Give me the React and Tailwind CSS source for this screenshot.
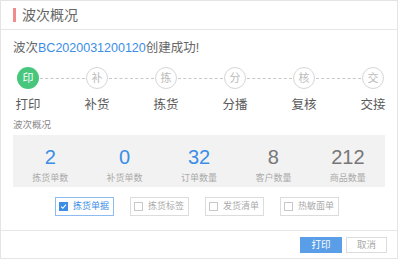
import React, { useState } from 'react';

const steps = [
  { short: '印', label: '打印', active: true },
  { short: '补', label: '补货' },
  { short: '拣', label: '拣货' },
  { short: '分', label: '分播' },
  { short: '核', label: '复核' },
  { short: '交', label: '交接' },
];

const stats = [
  { value: '2', label: '拣货单数', blue: true },
  { value: '0', label: '补货单数', blue: true },
  { value: '32', label: '订单数量', blue: true },
  { value: '8', label: '客户数量' },
  { value: '212', label: '商品数量' },
];

const options = ['拣货单据', '拣货标签', '发货清单', '热敏面单'];

const App = () => {
  const [checked, setChecked] = useState({ 拣货单据: true });

  return (
    <div
      className="w-[398px] h-[260px] bg-white text-[#666]"
      style={{ fontFamily: '"Liberation Sans", "Noto Sans CJK SC", sans-serif' }}
    >
      <div className="w-[398px] h-[259px] border border-[#e4e4e4] flex flex-col">
        {/* header */}
        <div className="h-[29px] border-b border-[#e6e6e6] flex items-center pl-[12px]">
          <span className="w-[3px] h-[14px] bg-[#f28b8b] mr-[6px]" />
          <span className="text-[14px] text-[#666]">波次概况</span>
        </div>

        {/* body */}
        <div className="flex-1 px-[12px] pt-[9px]">
          <div className="text-[12.5px] leading-[18px] text-[#666]">
            波次<span className="text-[#3a8ee6]">BC2020031200120</span>创建成功!
          </div>

          {/* steps */}
          <div className="flex mt-[10px] ml-[4px]">
            {steps.map((s, i) => (
              <div key={s.short} className={`flex flex-col items-center ${i < steps.length - 1 ? 'w-[69px]' : 'w-[22px]'} relative`}>
                <div className="flex items-center w-full">
                  <div
                    className={`w-[22px] h-[22px] shrink-0 rounded-full flex items-center justify-center text-[11px] ${
                      s.active ? 'bg-[#48c77c] text-white' : 'border border-[#d6d6d6] text-[#bbb] bg-white'
                    }`}
                  >
                    {s.short}
                  </div>
                  {i < steps.length - 1 && (
                    <div className="flex-1 border-t border-dashed border-[#c8c8c8] mx-[1px]" />
                  )}
                </div>
                <div className="absolute top-[29px] left-[11px] -translate-x-1/2 whitespace-nowrap text-[12.5px] text-[#5a5a5a]">
                  {s.label}
                </div>
              </div>
            ))}
          </div>

          <div className="mt-[29px] text-[9.5px] text-[#888]">波次概况</div>

          {/* stats */}
          <div className="mt-[3px] h-[52px] bg-[#f2f2f2] flex items-start pt-[11px]">
            {stats.map((s) => (
              <div key={s.label} className="flex-1 flex flex-col items-center">
                <div className={`text-[20px] leading-[22px] ${s.blue ? 'text-[#3a8ee6]' : 'text-[#777]'}`}>{s.value}</div>
                <div className="text-[9px] leading-[12px] mt-[4px] text-[#aaa]">{s.label}</div>
              </div>
            ))}
          </div>

          {/* print options */}
          <div className="flex justify-center gap-[16px] mt-[10px] ml-[-5px]">
            {options.map((o) => {
              const on = !!checked[o];
              return (
                <button
                  key={o}
                  onClick={() => setChecked({ ...checked, [o]: !on })}
                  className={`w-[59px] h-[19px] flex items-center justify-center gap-[5px] border text-[9px] ${
                    on ? 'border-[#8dbdf0] text-[#3a8ee6]' : 'border-[#dcdcdc] text-[#aaa]'
                  }`}
                >
                  <span
                    className={`w-[9px] h-[9px] flex items-center justify-center ${
                      on ? 'bg-[#3a8ee6]' : 'border border-[#c8c8c8] bg-white'
                    }`}
                  >
                    {on && (
                      <svg width="7" height="7" viewBox="0 0 8 8">
                        <path d="M1.2 4.2 L3.2 6 L6.8 1.8" stroke="white" strokeWidth="1.3" fill="none" />
                      </svg>
                    )}
                  </span>
                  {o}
                </button>
              );
            })}
          </div>
        </div>

        {/* footer */}
        <div className="h-[28px] border-t border-[#e6e6e6] flex items-center justify-end gap-[4px] pr-[10px]">
          <button className="w-[42px] h-[16px] bg-[#5b9ee8] text-white text-[9.5px] leading-[16px]">打印</button>
          <button className="w-[41px] h-[16px] border border-[#dcdcdc] text-[#aaa] text-[9.5px] leading-[14px]">取消</button>
        </div>
      </div>
    </div>
  );
};

export default App;
